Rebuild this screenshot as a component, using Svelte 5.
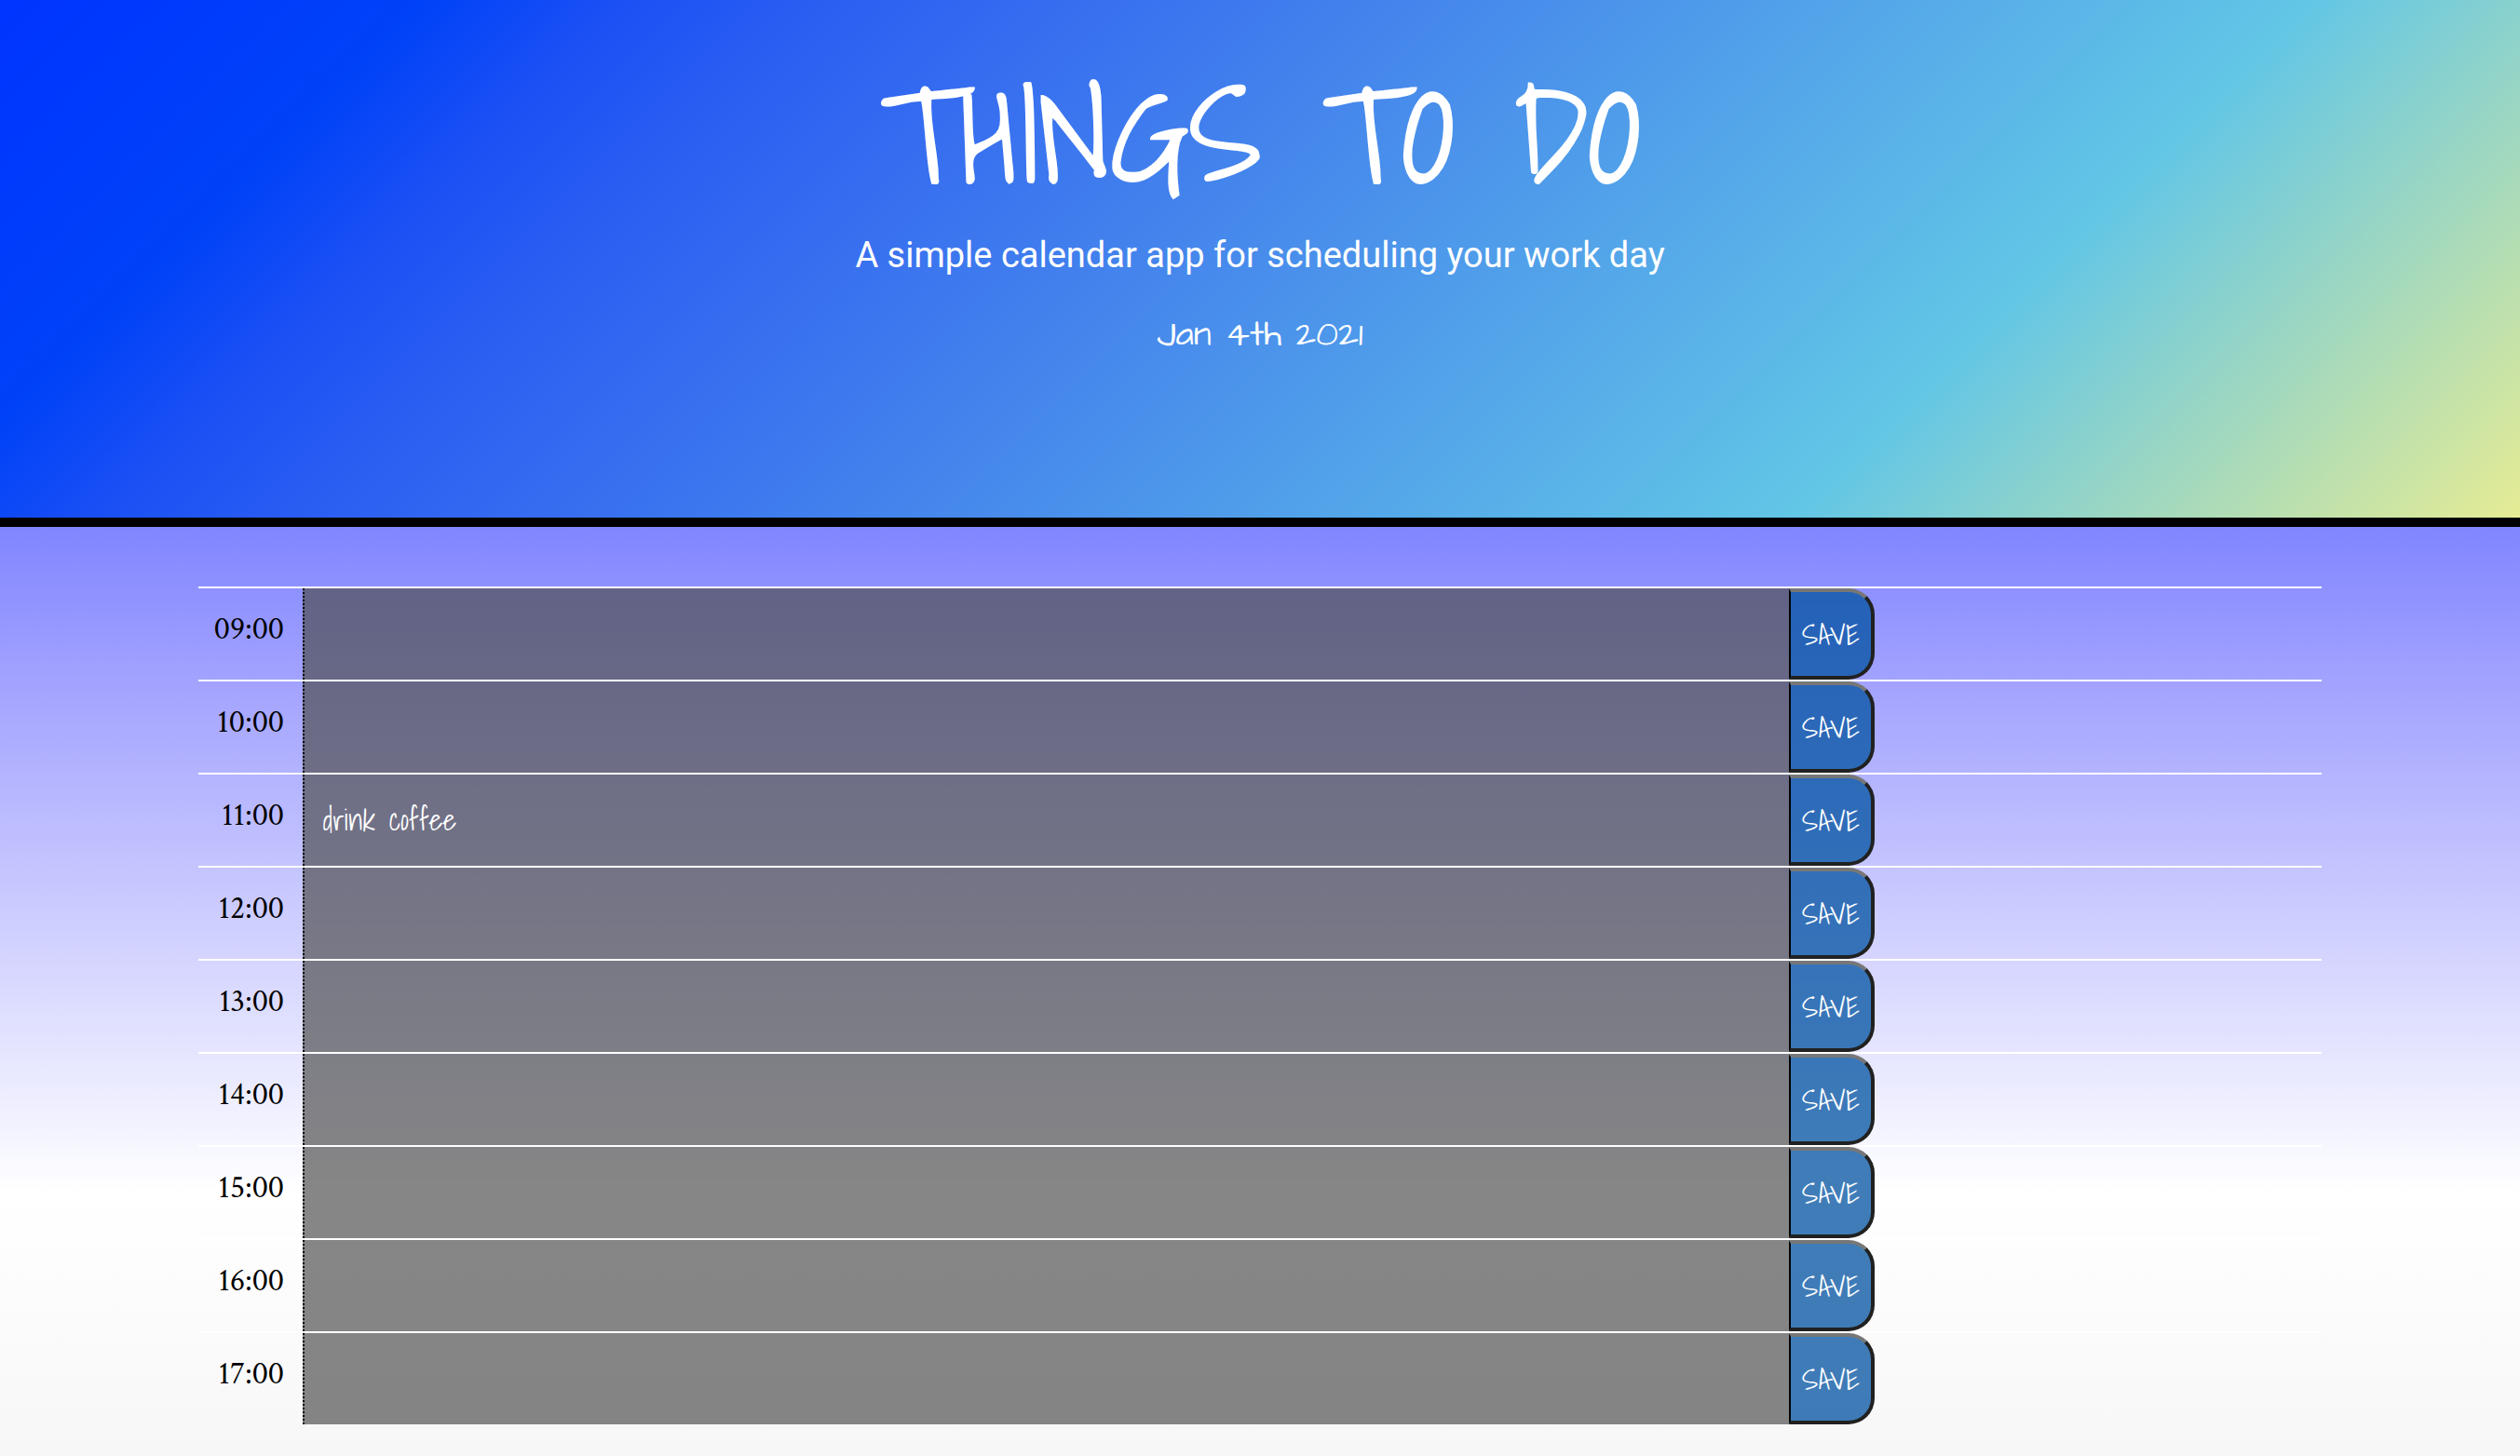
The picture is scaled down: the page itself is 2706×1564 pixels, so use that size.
<script>
  const hours = ['09:00', '10:00', '11:00', '12:00', '13:00', '14:00', '15:00', '16:00', '17:00'];
  let tasks = $state(hours.map((hour) => (hour === '11:00' ? 'drink coffee' : '')));
</script>

<header>
  <h1>THINGS TO DO</h1>
  <p class="lead">A simple calendar app for scheduling your work day</p>
  <p class="date">Jan 4th 2021</p>
</header>

<main>
  {#each hours as hour, i}
    <form class="row" onsubmit={(e) => e.preventDefault()}>
      <label for="task-{i}">{hour}</label>
      <textarea id="task-{i}" bind:value={tasks[i]}></textarea>
      <button type="submit">SAVE</button>
    </form>
  {/each}
</main>

<style>
  :global(body) {
    margin: 0;
    min-height: 100vh;
    background: linear-gradient(180deg, #0000ff 0%, #8085ff 36%, #a3a3ff 47%, #ffffff 82%, #f7f7f7 100%);
  }

  :global(*) {
    box-sizing: border-box;
  }

  header {
    display: flex;
    flex-direction: column;
    align-items: center;
    padding: 72px 0 168px;
    border-bottom: 10px solid #000;
    background: linear-gradient(
      135deg,
      #0034ff 0%,
      #0042f8 14%,
      #1a4ff5 20%,
      #2a5ef2 27%,
      #366df0 35%,
      #4688ec 48%,
      #62c6e6 76%,
      #e6ec94 100%
    );
    color: #fff;
    text-align: center;
  }

  h1 {
    margin: 0;
    font: 400 144px/144px 'Shadows Into Light', Lato, sans-serif;
    -webkit-text-stroke: 2px #fff;
  }

  .lead {
    margin: 28px 0 0;
    font: 400 38px/60px Roboto, sans-serif;
  }

  .date {
    margin: 28px 0 0;
    font: 400 38px/56px Papyrus, 'Architects Daughter', Lato, fantasy;
  }

  main {
    max-width: 2280px;
    margin: 0 auto;
    padding: 64px 0 32px;
  }

  .row {
    display: flex;
    height: 100px;
    border-top: 2px solid #fff;
  }

  label {
    flex: 0 0 112px;
    padding: 20px 20px 0 0;
    color: #000;
    font: 400 34px/48px 'Crimson Text', 'Liberation Serif', serif;
    text-align: right;
  }

  textarea {
    flex: 0 0 1596px;
    padding: 24px 20px;
    border: 0;
    border-left: 2px dotted #000;
    background: rgba(76, 76, 76, 0.68);
    color: #fff;
    font: 400 32px/48px 'Shadows Into Light', Lato, sans-serif;
    resize: none;
    outline: none;
  }

  button {
    flex: 0 0 92px;
    padding: 0;
    border: 4px solid #212121;
    border-top-color: #777;
    border-left: 2px solid #000;
    border-radius: 0 28px 28px 0;
    background: rgba(0, 82, 160, 0.75);
    color: #fff;
    font: 400 32px/48px 'Shadows Into Light', Lato, sans-serif;
  }
</style>
